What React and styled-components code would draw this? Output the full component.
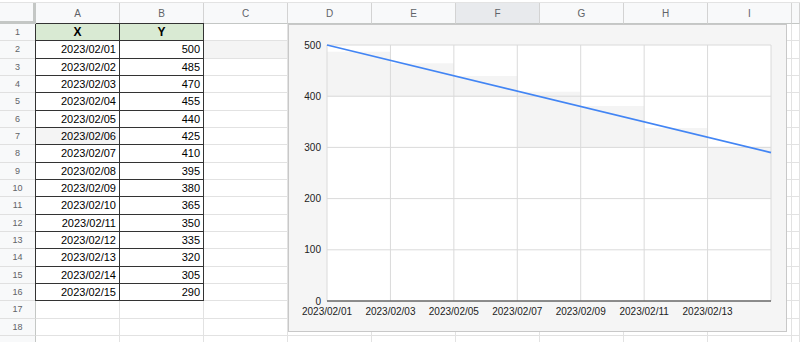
import styled, { createGlobalStyle } from "styled-components";

const GlobalStyle = createGlobalStyle`
  body {
    margin: 0;
    background: #fff;
    font-family: "Liberation Sans", Arial, sans-serif;
  }
`;

const COLS = ["A", "B", "C", "D", "E", "F", "G", "H", "I", ""];
const ROW_COUNT = 19;

const rows = Array.from({ length: 15 }, (_, i) => ({
  x: `2023/02/${String(i + 1).padStart(2, "0")}`,
  y: 500 - i * 15,
}));

const Page = styled.div`
  position: relative;
  width: 800px;
  height: 342px;
  overflow: hidden;
`;

const TopStrip = styled.div`
  height: 3px;
  background: #fff;
  border-bottom: 1px solid #e3e3e3;
  box-sizing: border-box;
`;

const Sheet = styled.div`
  display: grid;
  grid-template-columns: 36px repeat(9, 84px) 1fr;
  grid-template-rows: 21px repeat(${ROW_COUNT}, 17.33px);
`;

const Corner = styled.div`
  background: #f8f9fa;
  border-right: 3px solid #c4c7c5;
  border-bottom: 3px solid #c4c7c5;
  box-sizing: border-box;
`;

const ColHead = styled.div`
  display: flex;
  align-items: center;
  justify-content: center;
  background: ${(p) => (p.$active ? "#e8eaed" : "#f8f9fa")};
  border-right: 1px solid #d3d3d3;
  border-bottom: 1px solid #c4c7c5;
  box-sizing: border-box;
  font-size: 10px;
  color: #5f6368;
`;

const RowHead = styled.div`
  display: flex;
  align-items: center;
  justify-content: center;
  background: #f8f9fa;
  border-right: 1px solid #c4c7c5;
  border-bottom: 1px solid #e0e0e0;
  box-sizing: border-box;
  font-size: 9px;
  color: #5f6368;
`;

const Cell = styled.div`
  display: flex;
  align-items: center;
  justify-content: ${(p) => (p.$head ? "center" : "flex-end")};
  padding: 0 3px;
  box-sizing: border-box;
  font-size: ${(p) => (p.$head ? "12px" : "11px")};
  font-weight: ${(p) => (p.$head ? 700 : 400)};
  color: #000;
  background: ${(p) => (p.$head ? "#d9ead3" : p.$shade ? "#f4f4f4" : "#fff")};
  border-right: 1px solid ${(p) => (p.$table ? "#333" : "#e2e2e2")};
  border-bottom: 1px solid ${(p) => (p.$table ? "#333" : "#e2e2e2")};
  box-shadow: ${(p) =>
    [p.$leftEdge && "-1px 0 0 #333", p.$topEdge && "0 -1px 0 #333"]
      .filter(Boolean)
      .join(", ") || "none"};
`;

const ChartBox = styled.div`
  position: absolute;
  left: 288px;
  top: 24px;
  width: 499px;
  height: 308px;
  box-sizing: border-box;
  background: #f5f5f5;
  border: 1px solid #c8c8c8;
`;

const AxisText = styled.text`
  font-family: "Liberation Sans", Arial, sans-serif;
  font-size: 10px;
  fill: #222;
`;

// plot area in page coordinates
const PX0 = 327;
const PX1 = 771;
const PY0 = 45;
const PY1 = 301;
const yOf = (v) => PY1 - (v / 500) * (PY1 - PY0);
const xStep = (PX1 - PX0) / 7;

const shades = [
  [0, 51.7, 97],
  [1, 63.3, 97],
  [2, 76, 97],
  [3, 91.7, 148],
  [4, 106, 148],
  [5, 128, 148],
  [6, 146.7, 198.6],
];

const Chart = () => (
  <ChartBox>
    <svg width="497" height="306" viewBox="289 25 497 306">
      <rect x={PX0} y={PY0} width={PX1 - PX0} height={PY1 - PY0} fill="#fff" />
      {shades.map(([i, t, b]) => (
        <rect
          key={i}
          x={PX0 + i * xStep}
          y={t}
          width={xStep}
          height={b - t}
          fill="#f4f4f4"
        />
      ))}
      {[100, 200, 300, 400, 500].map((v) => (
        <line key={v} x1={PX0} x2={PX1} y1={yOf(v)} y2={yOf(v)} stroke="#dadada" strokeWidth="1" />
      ))}
      {Array.from({ length: 8 }, (_, i) => (
        <line
          key={i}
          x1={PX0 + i * xStep}
          x2={PX0 + i * xStep}
          y1={PY0}
          y2={PY1}
          stroke="#dadada"
          strokeWidth="1"
        />
      ))}
      <line x1={PX0} x2={PX1} y1={PY1} y2={PY1} stroke="#666" strokeWidth="1.5" />
      <line x1={PX0} y1={yOf(500)} x2={PX1} y2={yOf(290)} stroke="#4285f4" strokeWidth="1.8" />
      {[0, 100, 200, 300, 400, 500].map((v) => (
        <AxisText key={v} x="321" y={yOf(v) + 3.5} textAnchor="end">
          {v}
        </AxisText>
      ))}
      {Array.from({ length: 7 }, (_, i) => (
        <AxisText key={i} x={PX0 + i * xStep} y="315" textAnchor="middle">
          {`2023/02/${String(i * 2 + 1).padStart(2, "0")}`}
        </AxisText>
      ))}
    </svg>
  </ChartBox>
);

export default function App() {
  const cells = [];
  cells.push(<Corner key="corner" />);
  COLS.forEach((c, i) =>
    cells.push(
      <ColHead key={"h" + i} $active={c === "F"}>
        {c}
      </ColHead>
    )
  );

  for (let r = 1; r <= ROW_COUNT; r++) {
    // last row is only a sliver at the bottom edge, its number is out of view
    cells.push(<RowHead key={"r" + r}>{r < ROW_COUNT ? r : ""}</RowHead>);
    COLS.forEach((c, ci) => {
      const key = `${c || "Z"}${r}`;
      const inTable = ci < 2 && r <= 16;
      let text = "";
      if (inTable) {
        if (r === 1) text = ci === 0 ? "X" : "Y";
        else text = ci === 0 ? rows[r - 2].x : rows[r - 2].y;
      }
      cells.push(
        <Cell
          key={key}
          $table={inTable}
          $head={inTable && r === 1}
          $leftEdge={inTable && ci === 0}
          $topEdge={inTable && r === 1}
          $shade={key === "A7" || key === "C2"}
        >
          {text}
        </Cell>
      );
    });
  }

  return (
    <Page>
      <GlobalStyle />
      <TopStrip />
      <Sheet>{cells}</Sheet>
      <Chart />
    </Page>
  );
}
